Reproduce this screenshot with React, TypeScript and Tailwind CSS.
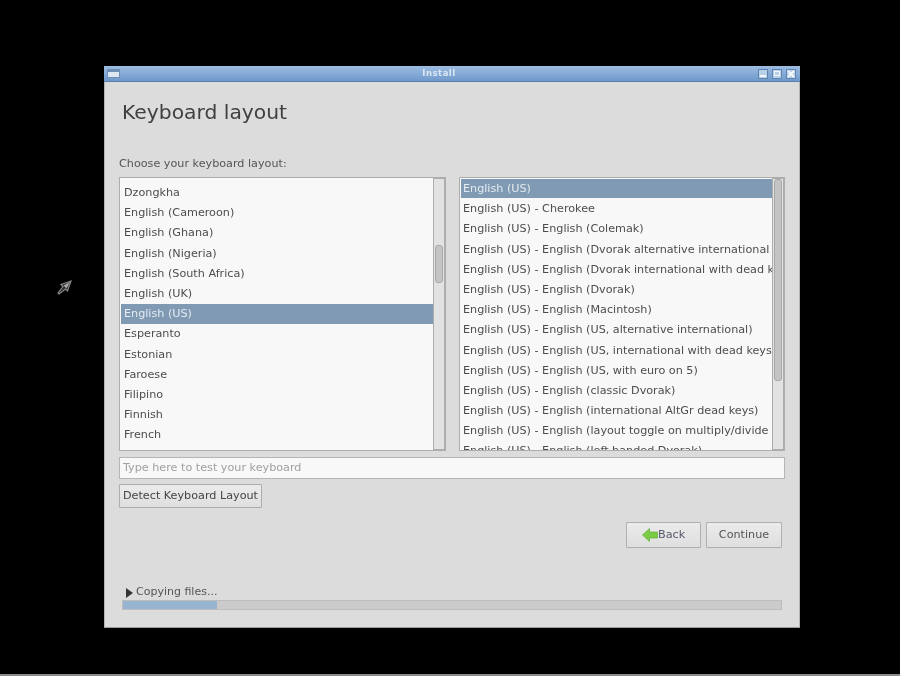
const leftItems = [
  "Dzongkha",
  "English (Cameroon)",
  "English (Ghana)",
  "English (Nigeria)",
  "English (South Africa)",
  "English (UK)",
  "English (US)",
  "Esperanto",
  "Estonian",
  "Faroese",
  "Filipino",
  "Finnish",
  "French",
];

const rightItems = [
  "English (US)",
  "English (US) - Cherokee",
  "English (US) - English (Colemak)",
  "English (US) - English (Dvorak alternative international no dead keys)",
  "English (US) - English (Dvorak international with dead keys)",
  "English (US) - English (Dvorak)",
  "English (US) - English (Macintosh)",
  "English (US) - English (US, alternative international)",
  "English (US) - English (US, international with dead keys)",
  "English (US) - English (US, with euro on 5)",
  "English (US) - English (classic Dvorak)",
  "English (US) - English (international AltGr dead keys)",
  "English (US) - English (layout toggle on multiply/divide key)",
  "English (US) - English (left handed Dvorak)",
];

function Row({ text, selected, extra }: { text: string; selected: boolean; extra: string }) {
  return (
    <div
      className={
        "h-[20.2px] shrink-0 whitespace-nowrap overflow-hidden " +
        extra +
        " " +
        (selected ? "bg-[#7f9ab2] text-[#e4ebf2]" : "text-[#4d4d4d]")
      }
    >
      {text}
    </div>
  );
}

function Scrollbar({ thumbTop, thumbHeight }: { thumbTop: string; thumbHeight: string }) {
  return (
    <div className="w-[12px] shrink-0 flex flex-col bg-[#e2e2e2] border border-[#adadad] px-[1px]">
      <div className={thumbTop} />
      <div className={thumbHeight + " bg-[#c4c4c4] border border-[#a8a8a8] rounded-[3px]"} />
    </div>
  );
}

function WinButton({ children }: { children: React.ReactNode }) {
  return (
    <div className="w-[10px] h-[10px] bg-[#b9cfe6] border border-[#5f86b3] flex items-center justify-center">
      {children}
    </div>
  );
}

export default function App() {
  return (
    <div
      className="relative w-[900px] h-[676px] bg-black flex flex-col overflow-hidden blur-[0.6px]"
      style={{ fontFamily: '"DejaVu Sans", sans-serif' }}
    >
      <div className="absolute left-[55px] top-[279px]">
        <svg width="18" height="18" viewBox="0 0 18 18" fill="none">
          <path d="M16 2 L6 5.5 L8 7.5 L3 14 L4 15 L10.5 10 L12.5 12 Z" stroke="#8a8a8a" strokeWidth="1.2" fill="#2a2a2a" />
          <path d="M15 3 L8.5 6.5 L11.5 9.5 Z" fill="#a8a8a8" />
        </svg>
      </div>

      <div className="ml-[104px] mt-[66px] w-[696px] h-[562px] bg-[#dcdcdc] flex flex-col border-b border-[#9a9a9a]">
        <div className="h-[16px] shrink-0 flex items-center px-[3px] bg-gradient-to-b from-[#9dbde2] to-[#6f99cb] border-b border-[#5b80ac]">
          <div className="w-[13px] h-[9px] bg-[#dfe8f2] border border-[#6e8fb5] border-t-[3px]" />
          <div className="flex-1 text-center text-[8.5px] tracking-[0.5px] font-bold text-[#dbe6f2]">Install</div>
          <div className="flex gap-[4px] pr-[1px]">
            <WinButton><div className="w-[6px] h-[2px] mt-[4px] bg-[#f2f6fa]" /></WinButton>
            <WinButton><div className="w-[6px] h-[5px] border border-[#f2f6fa]" /></WinButton>
            <WinButton>
              <svg width="8" height="8" viewBox="0 0 8 8">
                <path d="M1 1 L7 7 M7 1 L1 7" stroke="#f6f9fc" strokeWidth="1.8" />
              </svg>
            </WinButton>
          </div>
        </div>

        <div className="flex-1 flex flex-col pl-[14px] pr-[14px] text-[11.2px] border-x border-[#b4b4b4]">
          <h1 className="mt-[15px] ml-[3px] h-[30px] leading-[30px] text-[20.3px] font-normal text-[#404040]">Keyboard layout</h1>
          <div className="mt-[28px] h-[18px] leading-[18px] text-[#555555]">Choose your keyboard layout:</div>

          <div className="mt-[4px] h-[274px] flex justify-between">
            <div className="w-[327px] flex bg-[#f8f8f8] border border-[#adadad] pt-[5px] pl-[1px] overflow-hidden">
              <div className="flex-1 min-w-0 flex flex-col">
                {leftItems.map((t) => (
                  <Row key={t} text={t} selected={t === "English (US)"} extra="pl-[3px] leading-[20.6px]" />
                ))}
              </div>
              <div className="-mt-[5px] flex">
                <Scrollbar thumbTop="h-[66px] shrink-0" thumbHeight="h-[38px]" />
              </div>
            </div>
            <div className="w-[326px] flex bg-[#f8f8f8] border border-[#adadad] pt-[1px] pl-[1px] overflow-hidden">
              <div className="flex-1 min-w-0 flex flex-col overflow-hidden">
                {rightItems.map((t, i) => (
                  <Row
                    key={t}
                    text={t}
                    selected={i === 0}
                    extra={i === 0 ? "pl-[2px] leading-[19.5px] border-b border-[#f8f8f8]" : "pl-[2px] leading-[19.5px]"}
                  />
                ))}
              </div>
              <div className="-mt-[1px] flex">
                <Scrollbar thumbTop="h-0 shrink-0" thumbHeight="h-[202px]" />
              </div>
            </div>
          </div>

          <div className="mt-[6px] h-[22px] bg-[#f8f8f8] border border-[#b5b5b5] pl-[3px] leading-[20px] text-[#a0a0a0]">
            Type here to test your keyboard
          </div>

          <button className="mt-[5px] w-[143px] h-[24px] bg-gradient-to-b from-[#ebebeb] to-[#dfdfdf] border border-[#adadad] rounded-[1px] text-[#444444] text-center whitespace-nowrap">
            Detect Keyboard Layout
          </button>

          <div className="mt-[14px] pr-[3px] flex justify-end gap-[5px]">
            <button className="w-[75px] h-[26px] bg-gradient-to-b from-[#ebebeb] to-[#dfdfdf] border border-[#b0b0b0] rounded-[1px] text-[#55596a] flex items-center pl-[15px]">
              <svg width="16" height="16" viewBox="0 0 16 16" className="shrink-0">
                <path d="M0.5 8 L7.5 1.5 L7.5 5 L15.5 5 L15.5 11 L7.5 11 L7.5 14.5 Z" fill="#79cc44" stroke="#5aa62c" strokeWidth="0.6" />
              </svg>
              <span>Back</span>
            </button>
            <button className="w-[76px] h-[26px] bg-gradient-to-b from-[#ebebeb] to-[#dfdfdf] border border-[#b0b0b0] rounded-[1px] text-[#555555]">Continue</button>
          </div>

          <div className="mt-[37px] ml-[7px] h-[15px] flex items-center gap-[3px] text-[#555555]">
            <svg width="7" height="10" viewBox="0 0 7 10">
              <path d="M0 0 L7 5 L0 10 Z" fill="#333333" />
            </svg>
            <span className="text-[11px]">Copying files...</span>
          </div>

          <div className="ml-[3px] mr-[3px] h-[10px] bg-[#cbcbcb] border border-[#bdbdbd] flex">
            <div className="w-[94px] bg-[#97b4d1]" />
          </div>
        </div>
      </div>

      <div className="mt-auto h-[2px] bg-[#8a8a8a]" />
    </div>
  );
}
